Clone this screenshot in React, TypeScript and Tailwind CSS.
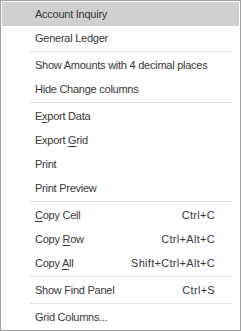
import React from 'react';

type Item = { label: React.ReactNode; shortcut?: string; active?: boolean } | 'sep';

const U = ({ children }: { children: React.ReactNode }) => <span className="underline underline-offset-2">{children}</span>;

const items: Item[] = [
  { label: 'Account Inquiry', active: true },
  { label: 'General Ledger' },
  'sep',
  { label: 'Show Amounts with 4 decimal places' },
  { label: 'Hide Change columns' },
  'sep',
  { label: <>E<U>x</U>port Data</> },
  { label: <>Export <U>G</U>rid</> },
  { label: 'Print' },
  { label: 'Print Preview' },
  'sep',
  { label: <><U>C</U>opy Cell</>, shortcut: 'Ctrl+C' },
  { label: <>Copy <U>R</U>ow</>, shortcut: 'Ctrl+Alt+C' },
  { label: <>Copy <U>A</U>ll</>, shortcut: 'Shift+Ctrl+Alt+C' },
  'sep',
  { label: 'Show Find Panel', shortcut: 'Ctrl+S' },
  'sep',
  { label: 'Grid Columns...' },
];

export default function App() {
  return (
    <div className="w-[241px] h-[331px] bg-white border border-[#a0a0a0] p-px text-[11px] text-[#383838] font-['Liberation_Sans',sans-serif]">
      {items.map((it, i) =>
        it === 'sep' ? (
          <div key={i} className="h-[3px] flex items-center pl-[28px] pr-[7px]">
            <div className="h-px w-full bg-[#e3e3e3]" />
          </div>
        ) : (
          <div
            key={i}
            className={`h-6 flex items-center pl-[33px] pr-[24px] ${it.active ? 'bg-[#d0d0d0]' : ''}`}
          >
            <span className="flex-1 whitespace-nowrap tracking-[-0.25px]">{it.label}</span>
            {it.shortcut && <span className="whitespace-nowrap tracking-[0.3px]">{it.shortcut}</span>}
          </div>
        )
      )}
    </div>
  );
}
